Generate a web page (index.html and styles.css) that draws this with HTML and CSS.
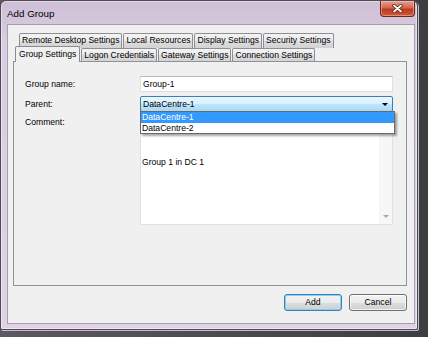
FILE: index.html
```html
<!DOCTYPE html>
<html lang="en">
<head>
    <meta charset="UTF-8">
    <meta name="viewport" content="width=device-width, initial-scale=1.0">
    <title>Add Group</title>
    <link rel="stylesheet" href="styles.css">
</head>
<body>
    <div class="window">
        <div class="titlebar">
            <span class="title">Add Group</span>
            <div class="close">
                <svg width="11" height="9" viewBox="0 0 11 9">
                    <path d="M2 1.5 L9 7.5 M9 1.5 L2 7.5" stroke="#5a1e14" stroke-width="3.4" stroke-linecap="round"/>
                    <path d="M2 1.5 L9 7.5 M9 1.5 L2 7.5" stroke="#fff" stroke-width="1.8" stroke-linecap="round"/>
                </svg>
            </div>
        </div>

        <div class="client">
            <div class="tabs">
                <div class="row back">
                    <div class="tab">Remote Desktop Settings</div>
                    <div class="tab">Local Resources</div>
                    <div class="tab">Display Settings</div>
                    <div class="tab">Security Settings</div>
                </div>
                <div class="row front">
                    <div class="tab selected">Group Settings</div>
                    <div class="tab">Logon Credentials</div>
                    <div class="tab">Gateway Settings</div>
                    <div class="tab">Connection Settings</div>
                </div>
            </div>

            <div class="panel">
                <div class="form">
                    <div class="label">Group name:</div>
                    <div class="textbox">Group-1</div>

                    <div class="label">Parent:</div>
                    <div class="combo-wrap">
                        <div class="combo">
                            <span>DataCentre-1</span>
                            <span class="arrow"></span>
                        </div>
                        <div class="dropdown">
                            <div class="item active">DataCentre-1</div>
                            <div class="item">DataCentre-2</div>
                        </div>
                    </div>

                    <div class="label top">Comment:</div>
                    <div class="memo">
                        <div class="memo-text">Group 1 in DC 1</div>
                        <div class="scroll"><span class="down"></span></div>
                    </div>
                </div>
            </div>

            <div class="actions">
                <div class="btn default">Add</div>
                <div class="btn">Cancel</div>
            </div>
        </div>
    </div>
</body>
</html>
```

FILE: styles.css
```css
* {
    margin: 0;
    padding: 0;
    box-sizing: border-box;
}
body {
    width: 428px;
    height: 337px;
    overflow: hidden;
    background: linear-gradient(90deg, #5c5a60, #3e3d42);
    font-family: "Liberation Sans", Arial, sans-serif;
    font-size: 8.6px;
    color: #000;
}
.window {
    width: 418px;
    height: 330px;
    display: flex;
    flex-direction: column;
    padding: 0 2px 5px 6px;
    background: linear-gradient(#cdbfd5, #dacde1 40px, #dfd3e5);
    border: 1px solid #4f4b54;
    border-radius: 6px 6px 2px 2px;
    box-shadow: inset 0 0 0 1px rgba(255, 255, 255, 0.45), 1px 1px 0 #c7bccc;
}
.titlebar {
    height: 23px;
    display: flex;
    align-items: flex-start;
}
.title {
    font-size: 9.8px;
    line-height: 11px;
    margin-top: 7px;
    color: #000;
}
.close {
    margin-left: auto;
    width: 35px;
    height: 16px;
    border: 1px solid #6b2418;
    border-top: none;
    border-radius: 0 0 4px 4px;
    background: linear-gradient(#e8a192, #d2654f 45%, #bd3a22 55%, #d0573c);
    box-shadow: inset 0 0 0 1px rgba(255, 210, 200, 0.45);
    display: flex;
    align-items: center;
    justify-content: center;
}
.client {
    width: 408px;
    height: 300px;
    display: flex;
    flex-direction: column;
    padding: 8px 7px 0 5px;
    background: #f0f0f0;
    border: 1px solid #a79dac;
}

/* tabs */
.tabs {
    height: 29px;
}
.row {
    display: flex;
}
.back {
    height: 15px;
    margin-left: 6px;
    gap: 1px;
}
.front {
    height: 14px;
    margin-left: 2px;
    align-items: flex-end;
    gap: 1px;
}
.tab {
    height: 15px;
    padding: 0 2px;
    line-height: 13px;
    border: 1px solid #8c8f96;
    border-bottom: none;
    border-radius: 2px 2px 0 0;
    background: linear-gradient(#f3f3f3, #ebebeb 50%, #dedede 50%, #d2d2d2);
    white-space: nowrap;
    color: #000;
}
.front .tab {
    height: 14px;
}
.front .tab.selected {
    position: relative;
    z-index: 1;
    height: 16px;
    padding: 1px 3px 0;
    background: #f0f0f0;
    border-color: #898c95;
}
.panel {
    height: 225px;
    margin-top: -1px;
    border: 1px solid #8e9197;
    background: #f0f0f0;
    padding: 14px 13px 0 11px;
}
.form {
    display: grid;
    grid-template-columns: 115px 1fr;
    row-gap: 4px;
}
.label {
    align-self: center;
}
.label.top {
    align-self: start;
    padding-top: 1px;
    line-height: 11px;
}
.textbox {
    height: 16px;
    line-height: 14px;
    padding-left: 2px;
    background: #fff;
    border: 1px solid #dde0e5;
    border-top-color: #b5b8bd;
}
.combo-wrap {
    position: relative;
}
.combo {
    height: 16px;
    display: flex;
    align-items: center;
    padding: 0 4px 0 2px;
    border: 1px solid #3c7fb1;
    border-radius: 2px;
    background: linear-gradient(#eaf6fd, #d9f0fc 50%, #bee6fd 50%, #a7d9f5);
}
.arrow {
    margin-left: auto;
    width: 0;
    height: 0;
    border-left: 3px solid transparent;
    border-right: 3px solid transparent;
    border-top: 3px solid #000;
}
.dropdown {
    position: absolute;
    top: 15px;
    left: 0;
    width: 255px;
    height: 23px;
    z-index: 2;
    background: #fff;
    border: 1px solid #6a6a6a;
    box-shadow: 2px 2px 2px rgba(0, 0, 0, 0.35);
}
.item {
    height: 11px;
    line-height: 11px;
    padding-left: 1px;
}
.item.active {
    background: #3399ff;
    color: #fff;
}
.memo {
    height: 109px;
    display: flex;
    background: #fff;
    border: 1px solid #dde0e5;
    border-top-color: #b5b8bd;
}
.memo-text {
    flex: 1;
    padding: 40px 0 0 1px;
    line-height: 11px;
}
.scroll {
    width: 13px;
    background: #f7f7f7;
    display: flex;
    align-items: flex-end;
    justify-content: center;
    padding-bottom: 6px;
}
.down {
    width: 0;
    height: 0;
    border-left: 3px solid transparent;
    border-right: 3px solid transparent;
    border-top: 3px solid #a8a8a8;
}

/* buttons */
.actions {
    display: flex;
    justify-content: flex-end;
    gap: 7px;
    margin-top: 8px;
}
.btn {
    width: 58px;
    height: 17px;
    line-height: 15px;
    text-align: center;
    border: 1px solid #707070;
    border-radius: 3px;
    background: linear-gradient(#f2f2f2, #ebebeb 50%, #dddddd 50%, #cfcfcf);
    box-shadow: inset 0 0 0 1px rgba(255, 255, 255, 0.7);
}
.btn.default {
    border-color: #3c7fb1;
    box-shadow: inset 0 0 0 1px #7fd3f9;
}
```
